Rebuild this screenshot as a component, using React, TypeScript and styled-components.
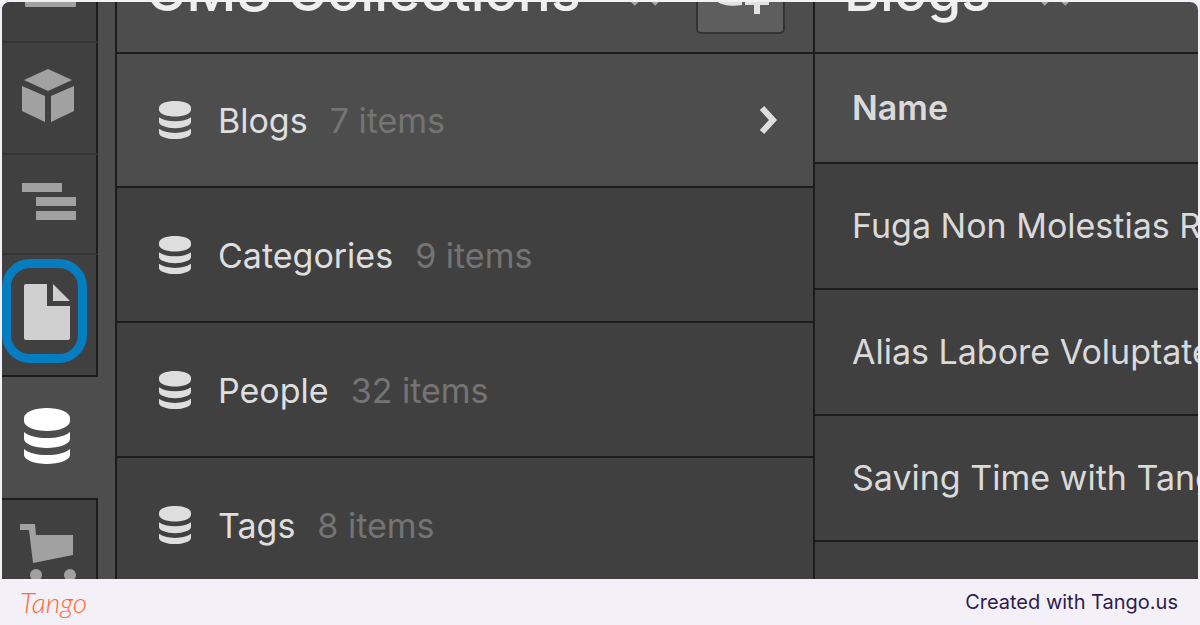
import React from 'react';
import styled, { createGlobalStyle } from 'styled-components';

const GlobalStyle = createGlobalStyle`
  *, *::before, *::after { box-sizing: border-box; }
  body {
    margin: 0;
    background: #f3f1f7;
    font-family: Inter, "Liberation Sans", sans-serif;
    color: #dadada;
  }
`;

const Page = styled.div`
  display: flex;
  flex-direction: column;
  height: 100vh;
  padding: 2px 2px 0;
`;

const Workspace = styled.main`
  flex: 1;
  min-height: 0;
  display: flex;
  align-items: stretch;
  overflow: hidden;
  border-radius: 8px 8px 0 0;
  background: #4d4d4d;
`;

const Sidebar = styled.nav`
  flex: none;
  width: 96px;
  margin-right: 17px;
  display: flex;
  flex-direction: column;
  overflow: hidden;
`;

const SideButton = styled.button<{ $height: number; $last?: boolean; $first?: boolean }>`
  flex: none;
  height: ${(p) => p.$height}px;
  display: flex;
  align-items: center;
  padding: 0 0 4px 18px;
  border: 0 solid #1c1c1c;
  border-right-width: 2px;
  border-top-width: ${(p) => (p.$first ? 2 : 0)}px;
  border-bottom: 2px solid ${(p) => (p.$last ? '#1c1c1c' : '#353535')};
  background: #404040;
  color: #a1a1a1;
`;

const ActiveSideButton = styled(SideButton)`
  padding-left: 22px;
  border: 0;
  background: transparent;
  color: #ffffff;
`;

const ClippedSideButton = styled(SideButton)`
  align-items: flex-start;
`;

const HighlightedSideButton = styled(SideButton)`
  padding: 0 0 8px;
`;

const Highlight = styled.span`
  display: flex;
  align-items: center;
  justify-content: center;
  width: 85px;
  height: 104px;
  padding: 2px 0 0 5px;
  border: 9px solid #057dc1;
  border-radius: 28px;
  color: #d0d0d0;
`;

const Collections = styled.section`
  flex: 1 1 700px;
  min-width: 0;
  border: 0 solid #1c1c1c;
  border-width: 0 2px;
`;

const Items = styled.section`
  flex: 0 1 383px;
  min-width: 0;
  overflow: hidden;
`;

const PanelHeader = styled.header`
  height: 52px;
  display: flex;
  align-items: flex-end;
  padding: 0 28px 18px 29px;
  border-bottom: 2px solid #1c1c1c;
  overflow: hidden;
`;

const Title = styled.h1`
  margin: 0;
  padding-bottom: 16px;
  font-size: 55px;
  line-height: 54px;
  font-weight: 500;
  white-space: nowrap;
  color: #eeeeee;
`;

const SortIcon = styled.svg`
  flex: none;
  margin: 0 0 28px 48px;
`;

const AddButton = styled.button`
  flex: none;
  display: flex;
  align-items: flex-end;
  justify-content: center;
  width: 89px;
  height: 76px;
  margin-left: auto;
  padding: 0 0 18px;
  border: 2px solid #333333;
  border-radius: 5px;
  background: #5e5e5e;
  color: #e2e2e2;
`;

const List = styled.ul`
  margin: 0;
  padding: 0;
  list-style: none;
`;

const CollectionButton = styled.button<{ $active: boolean }>`
  width: 100%;
  height: ${(p) => (p.$active ? 134 : 135)}px;
  display: flex;
  align-items: center;
  padding: 0 34px 0 42px;
  border: 0;
  border-bottom: 2px solid #1c1c1c;
  background: ${(p) => (p.$active ? '#4d4d4d' : '#404040')};
  font: 400 34px/40px Inter, "Liberation Sans", sans-serif;
  color: #dedede;
  text-align: left;
`;

const Name = styled.span`
  margin-left: 27px;
  padding-top: 2px;
`;

const Count = styled.span`
  margin-left: 22px;
  margin-right: auto;
  padding-top: 2px;
  color: #747474;
`;

const Table = styled.table`
  width: 100%;
  border-collapse: separate;
  border-spacing: 0;
  table-layout: fixed;
  text-align: left;
  white-space: nowrap;
`;

const HeadCell = styled.th`
  height: 110px;
  padding: 0 0 0 37px;
  border-bottom: 2px solid #1c1c1c;
  font: 600 34px/40px Inter, "Liberation Sans", sans-serif;
`;

const Cell = styled.td`
  height: 126px;
  padding: 0 0 0 37px;
  border-bottom: 2px solid #1c1c1c;
  background: #404040;
  font: 400 34px/40px Inter, "Liberation Sans", sans-serif;
`;

const Footer = styled.footer`
  flex: none;
  height: 46px;
  display: flex;
  align-items: center;
  justify-content: space-between;
  padding: 0 20px 0 18px;
  color: #2f1a4d;
  font: 400 20px/24px Inter, "Liberation Sans", sans-serif;
`;

const Logo = styled.a`
  color: #ff6b35;
  font-family: Lato, "Liberation Sans", sans-serif;
  font-size: 28px;
  font-style: italic;
  font-weight: 300;
  text-decoration: none;
`;

const DatabaseIcon = ({ width, height }: { width: number; height: number }) => (
  <svg width={width} height={height} viewBox="0 0 46 56" preserveAspectRatio="none" fill="currentColor" aria-hidden="true">
    <path d="M23 0C35 0 46 4 46 10V13C46 19 35 23 23 23S0 19 0 13V10C0 4 11 0 23 0Z" />
    <path d="M0 24C5 28 13 30 23 30S41 28 46 24V31C46 36 35 40 23 40S0 36 0 31Z" />
    <path d="M0 41C5 45 13 47 23 47S41 45 46 41V47C46 52 35 56 23 56S0 52 0 47Z" />
  </svg>
);

const Caret = () => (
  <SortIcon width="32" height="18" viewBox="0 0 32 18" fill="none" stroke="#a6a6a6" strokeWidth="5" aria-hidden="true">
    <path d="M4 16L16 4L28 16" />
  </SortIcon>
);

const collections = [
  { name: 'Blogs', count: 7 },
  { name: 'Categories', count: 9 },
  { name: 'People', count: 32 },
  { name: 'Tags', count: 8 },
];

const entries = ['Fuga Non Molestias R', 'Alias Labore Voluptate', 'Saving Time with Tango', ''];

export default function App() {
  return (
    <>
      <GlobalStyle />
      <Page>
        <Workspace>
          <Sidebar aria-label="Tools">
            <ClippedSideButton $height={41} aria-label="Add">
              <svg width="60" height="5" viewBox="0 0 60 5" fill="currentColor" aria-hidden="true">
                <path d="M5 0H56V4Q56 5 55 5H6Q5 5 5 4Z" />
              </svg>
            </ClippedSideButton>
            <SideButton $height={112} aria-label="Components">
              <svg width="56" height="56" viewBox="0 0 56 56" fill="currentColor" aria-hidden="true">
                <path d="M28 1L52 12L28 23L4 12Z" />
                <path d="M2 18L25 28V54L2 43Z" />
                <path d="M54 18L31 28V54L54 43Z" />
              </svg>
            </SideButton>
            <SideButton $height={100} aria-label="Navigator">
              <svg width="60" height="40" viewBox="0 0 60 40" fill="currentColor" aria-hidden="true">
                <path d="M2 1H42V10H2ZM16 15H56V24H16ZM16 29H56V38H16Z" />
              </svg>
            </SideButton>
            <HighlightedSideButton $height={122} $last aria-label="Pages">
              <Highlight>
                <svg width="46" height="56" viewBox="0 0 46 56" fill="currentColor" aria-hidden="true">
                  <path d="M2 0H23V22H46V54Q46 56 44 56H2Q0 56 0 54V2Q0 0 2 0Z" />
                  <path d="M29 0L46 17H29Z" />
                </svg>
              </Highlight>
            </HighlightedSideButton>
            <ActiveSideButton $height={121} aria-label="CMS">
              <DatabaseIcon width={46} height={56} />
            </ActiveSideButton>
            <SideButton $height={114} $first aria-label="Ecommerce">
              <svg width="58" height="58" viewBox="0 0 58 58" fill="currentColor" aria-hidden="true">
                <path d="M0 0H15L16 11H53V31L13 39L9 6H0Z" />
                <circle cx="16" cy="51" r="6" />
                <circle cx="50" cy="51" r="6" />
              </svg>
            </SideButton>
          </Sidebar>

          <Collections>
            <PanelHeader>
              <Title>CMS Collections</Title>
              <Caret />
              <AddButton aria-label="Add collection">
                <svg width="56" height="36" viewBox="0 0 56 36" fill="currentColor" aria-hidden="true">
                  <path d="M2 12C8 20 20 21 29 18V27C16 29 2 27 2 18Z" />
                  <path d="M41 10H47V21H56V27H47V36H41V27H32V21H41Z" />
                </svg>
              </AddButton>
            </PanelHeader>
            <List>
              {collections.map((c, i) => (
                <li key={c.name}>
                  <CollectionButton $active={i === 0}>
                    <DatabaseIcon width={32} height={38} />
                    <Name>{c.name}</Name>
                    <Count>{c.count} items</Count>
                    {i === 0 && (
                      <svg width="20" height="30" viewBox="0 0 20 30" fill="none" stroke="currentColor" strokeWidth="6" aria-hidden="true">
                        <path d="M3 3L14 15L3 27" />
                      </svg>
                    )}
                  </CollectionButton>
                </li>
              ))}
            </List>
          </Collections>

          <Items>
            <PanelHeader>
              <Title as="h2">Blogs</Title>
              <Caret />
            </PanelHeader>
            <Table>
              <thead>
                <tr>
                  <HeadCell>Name</HeadCell>
                </tr>
              </thead>
              <tbody>
                {entries.map((text) => (
                  <tr key={text}>
                    <Cell>{text}</Cell>
                  </tr>
                ))}
              </tbody>
            </Table>
          </Items>
        </Workspace>
        <Footer>
          <Logo href="#">Tango</Logo>
          <span>Created with Tango.us</span>
        </Footer>
      </Page>
    </>
  );
}
